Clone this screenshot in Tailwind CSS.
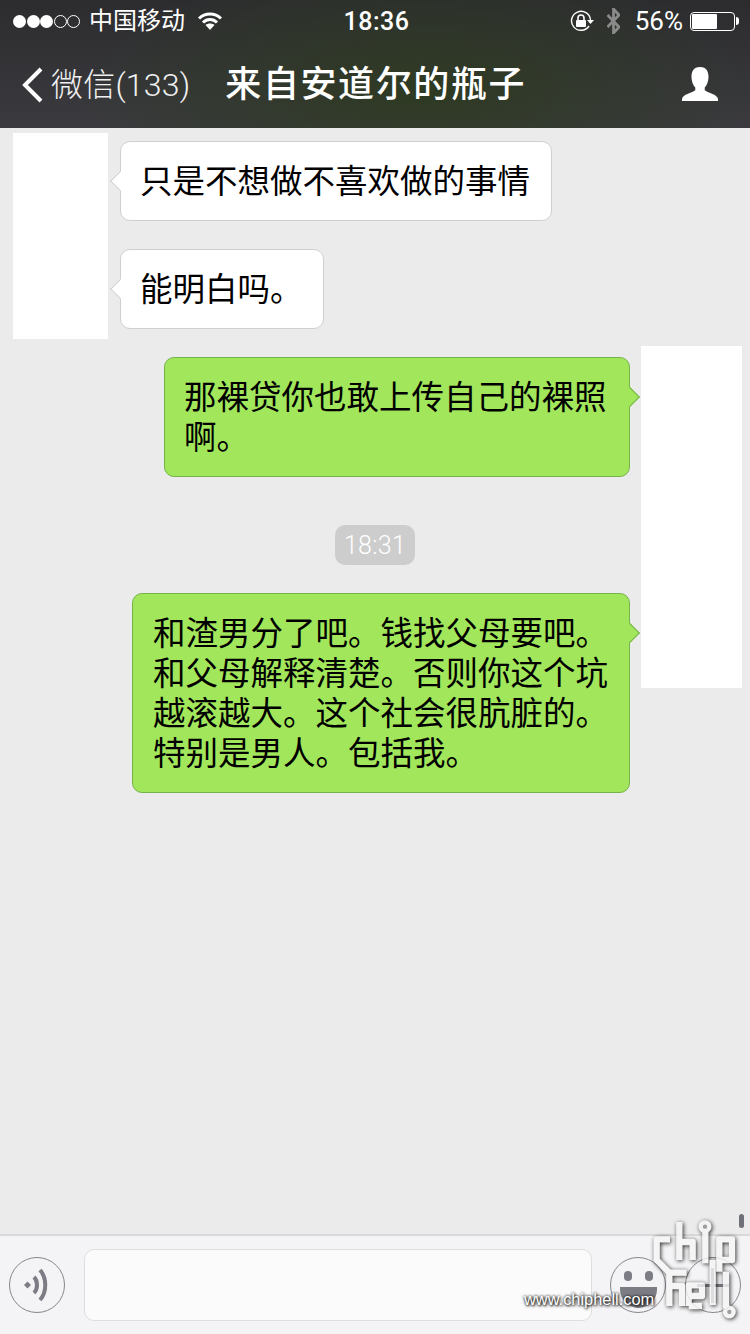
<!DOCTYPE html>
<html lang="zh-CN">
<head>
    <meta charset="UTF-8">
    <title>微信</title>
    <meta name="viewport" content="width=device-width, initial-scale=1.0">
    <script src="https://cdn.jsdelivr.net/npm/@tailwindcss/browser@4"></script>
</head>
<body class="w-[750px] h-[1334px] overflow-hidden relative bg-[#ebebeb] flex flex-col font-['Roboto','Noto_Sans_CJK_SC',sans-serif] text-black">

    <!-- header -->
    <header class="h-[128px] shrink-0 text-white bg-[radial-gradient(ellipse_340px_130px_at_56%_70%,#2e3a22,transparent),linear-gradient(to_bottom,#2c2c2f,#3b3b3f)]">
        <div class="h-10 flex items-center justify-between pl-[13px] pr-[11px] pt-[2px]">
            <div class="flex items-center w-[300px]">
                <div class="flex gap-[0.5px] items-center">
                    <span class="w-[13px] h-[13px] rounded-full bg-white"></span>
                    <span class="w-[13px] h-[13px] rounded-full bg-white"></span>
                    <span class="w-[13px] h-[13px] rounded-full bg-white"></span>
                    <span class="w-[13px] h-[13px] rounded-full border border-white"></span>
                    <span class="w-[13px] h-[13px] rounded-full border border-white"></span>
                </div>
                <span class="ml-[9px] text-[24px] leading-none">中国移动</span>
                <svg class="ml-[13px]" width="24" height="18" viewBox="0 0 24 18" fill="none" stroke="white" stroke-width="3">
                    <path d="M1 6.5 C7 0.5 17 0.5 23 6.5"/>
                    <path d="M5 10.5 C9 6.5 15 6.5 19 10.5"/>
                    <path d="M12 18 L7.5 13 C10 11 14 11 16.5 13 Z" fill="white" stroke="none"/>
                </svg>
            </div>
            <span class="text-[25px] leading-none font-medium tracking-[0.5px] ml-[1px]">18:36</span>
            <div class="flex items-center w-[300px] justify-end">
                <svg width="26" height="24" viewBox="0 0 26 24" fill="none" stroke="white" stroke-width="1.4">
                    <path d="M19 17 A9.5 9.5 0 1 1 20.5 11"/>
                    <path d="M17 11 h7 l-3.5 4 Z" fill="white" stroke="none"/>
                    <rect x="6" y="11" width="10" height="7" rx="1" fill="white" stroke="none"/>
                    <path d="M8 11 V9 a3 3 0 0 1 6 0 V11" stroke-width="1.6"/>
                </svg>
                <svg class="ml-[11px]" width="13" height="26" viewBox="0 0 13 26" fill="none" stroke="#8a8a8a" stroke-width="2.8">
                    <path d="M0.5 7 L12 19 L6.5 25 V1 L12 7 L0.5 19"/>
                </svg>
                <span class="ml-[15px] text-[26px] leading-none">56%</span>
                <div class="ml-[7px] w-[45px] h-[19px] rounded-[4px] border border-white p-[1px]">
                    <div class="w-[25px] h-full bg-white rounded-[1px]"></div>
                </div>
                <span class="ml-[1px] w-[3px] h-[8px] bg-white rounded-r-sm"></span>
            </div>
        </div>
        <div class="h-[88px] flex items-center relative pl-[21px] pt-[2px]">
            <svg width="22" height="36" viewBox="0 0 22 36" fill="none" stroke="white" stroke-width="4">
                <path d="M20 2 L4 18 L20 34"/>
            </svg>
            <span class="ml-[8px] text-[32px] leading-none font-light tracking-[0.2px] text-[#f0f0f0]">微信(133)</span>
            <span class="ml-[35px] text-[36px] leading-none tracking-[1.6px] font-medium">来自安道尔的瓶子</span>
            <svg class="absolute left-[682px] top-[27px]" width="36" height="35" viewBox="0 0 38 36" fill="white" preserveAspectRatio="none">
                <path d="M19 0 C12 0 10 5 10 10 C10 15 12 19 14 21 L14 24 C10 27 1 28 0 33 L0 35 L38 35 L38 33 C37 28 28 27 24 24 L24 21 C26 19 28 15 28 10 C28 5 26 0 19 0 Z"/>
            </svg>
        </div>
    </header>

    <!-- messages -->
    <main class="flex-1 flex flex-col pt-[13px]">
        <div class="self-start ml-[120px] relative bg-white border border-[#cfcfcf] rounded-[10px] pl-[19px] pr-[21px] pt-[20px] pb-[18px] text-[32.5px] leading-[40px] whitespace-nowrap">
            <span class="absolute left-[-8px] top-[32px] w-[14px] h-[14px] rotate-45 bg-white border-l border-b border-[#cfcfcf]"></span>
            <span class="relative">只是不想做不喜欢做的事情</span>
        </div>
        <div class="self-start ml-[120px] mt-[28px] w-[204px] relative bg-white border border-[#cfcfcf] rounded-[10px] pl-[19px] pt-[20px] pb-[18px] text-[32.5px] leading-[40px] whitespace-nowrap">
            <span class="absolute left-[-8px] top-[32px] w-[14px] h-[14px] rotate-45 bg-white border-l border-b border-[#cfcfcf]"></span>
            <span class="relative">能明白吗。</span>
        </div>
        <div class="self-end mr-[120px] mt-[28px] relative w-[466px] bg-[#a2e65b] border border-[#74b44b] rounded-[10px] pl-[19px] pt-[20px] pb-[18px] text-[32.5px] leading-[40px] whitespace-nowrap">
            <span class="absolute right-[-8px] top-[32px] w-[14px] h-[14px] rotate-45 bg-[#a2e65b] border-r border-t border-[#74b44b]"></span>
            <span class="relative">那裸贷你也敢上传自己的裸照<br>啊。</span>
        </div>
        <div class="self-center mt-[48px] w-[80px] h-[40px] pt-[2px] rounded-[10px] bg-[#cdcdcd] text-white text-[25px] font-light tracking-[0.3px] flex items-center justify-center">18:31</div>
        <div class="self-end mr-[120px] mt-[28px] relative w-[498px] bg-[#a2e65b] border border-[#74b44b] rounded-[10px] pl-[20px] pt-[20px] pb-[18px] text-[32.5px] leading-[40px] whitespace-nowrap">
            <span class="absolute right-[-8px] top-[32px] w-[14px] h-[14px] rotate-45 bg-[#a2e65b] border-r border-t border-[#74b44b]"></span>
            <span class="relative">和渣男分了吧。钱找父母要吧。<br>和父母解释清楚。否则你这个坑<br>越滚越大。这个社会很肮脏的。<br>特别是男人。包括我。</span>
        </div>
    </main>

    <!-- input bar -->
    <footer class="h-[100px] shrink-0 bg-[#f4f4f6] border-t-2 border-[#d9d9d9] flex items-center pl-[9px] pr-[9px]">
        <div class="w-[56px] h-[56px] rounded-full border border-[#85858d] flex items-center justify-center pr-[2px]">
            <svg width="24" height="34" viewBox="0 0 24 34" fill="none" stroke="#7c7c84" stroke-width="4">
                <path d="M0 17 L3.5 13.5 L7 17 L3.5 20.5 Z" fill="#7c7c84" stroke="none"/>
                <path d="M10 9 C14 13 14 21 10 25"/>
                <path d="M16 2 C23 10 23 24 16 32"/>
            </svg>
        </div>
        <div class="ml-[19px] w-[508px] h-[72px] rounded-[10px] bg-[#fbfbfb] border border-[#dedede]"></div>
        <div class="ml-[18px] w-[56px] h-[56px] rounded-full border border-[#85858d] relative">
            <span class="absolute left-[13px] top-[13px] w-[8px] h-[10px] rounded-full bg-[#7c7c84]"></span>
            <span class="absolute left-[34px] top-[13px] w-[8px] h-[10px] rounded-full bg-[#7c7c84]"></span>
            <span class="absolute left-[9px] top-[29px] w-[37px] h-[21px] rounded-b-[20px] bg-[#7c7c84]"></span>
        </div>
        <div class="ml-[19px] w-[56px] h-[56px] rounded-full border border-[#85858d] relative">
            <span class="absolute left-[25px] top-[10px] w-[3px] h-[35px] bg-[#7c7c84]"></span>
            <span class="absolute left-[11px] top-[26px] w-[32px] h-[3px] bg-[#7c7c84]"></span>
        </div>
    </footer>

    <!-- privacy masks over the avatars -->
    <div class="absolute left-[13px] top-[133px] w-[95px] h-[206px] bg-white"></div>
    <div class="absolute left-[641px] top-[346px] w-[101px] h-[342px] bg-white"></div>

    <!-- scroll indicator -->
    <div class="absolute left-[739px] top-[1214px] w-[5px] h-[14px] rounded-full bg-[#6f7078]"></div>

    <!-- watermark -->
    <svg class="absolute left-[640px] top-[1210px] opacity-80 drop-shadow-[1px_1px_2px_rgba(0,0,0,1)]" width="110" height="124" viewBox="0 0 330 372" fill="none" stroke="#f6f6f6" stroke-width="19" stroke-linejoin="round">
        <path d="M90 88 H50 V150 L88 188 V288"/>
        <path d="M88 188 H140"/>
        <path d="M118 36 V150"/>
        <path d="M118 96 H158 V150"/>
        <path d="M196 66 V160"/>
        <path d="M238 150 V88 H276 V150 H238 M238 150 V185"/>
        <path d="M88 228 H126 V288"/>
        <path d="M146 288 V226 H186 V258 H146 M146 288 H186"/>
        <path d="M218 150 V285"/>
        <path d="M258 185 V295"/>
        <circle cx="195" cy="50" r="13" stroke-width="13" fill="#8a8a8a"/>
        <circle cx="268" cy="306" r="13" stroke-width="13" fill="#8a8a8a"/>
    </svg>
    <span class="absolute left-[524px] top-[1289px] text-[16.4px] leading-[20px] font-['Liberation_Sans',sans-serif] text-white [text-shadow:0_0_3px_#000,1px_1px_3px_#000]">www.chiphell.com</span>
</body>
</html>
